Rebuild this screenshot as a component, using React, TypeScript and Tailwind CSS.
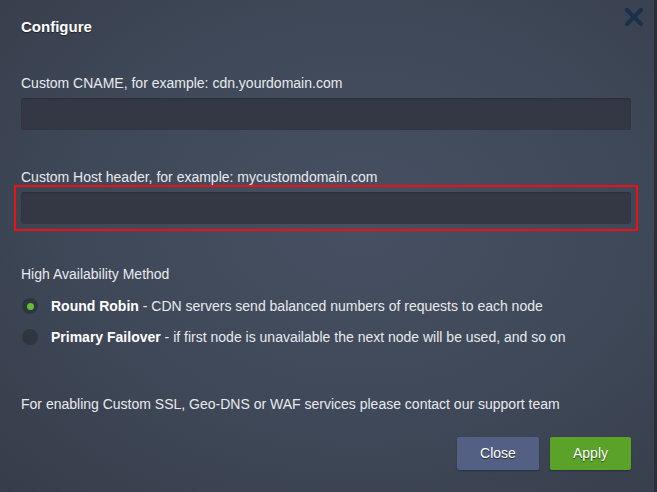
import { X } from "lucide-react"

function Field({ label, highlighted }: { label: string; highlighted?: boolean }) {
  return (
    <div className="flex flex-col">
      <label className="text-[14px] leading-[16px] text-[#e8eaee]">{label}</label>
      <div className={`-mx-[7px] -mb-[7px] p-[5px] border-2 ${highlighted ? "border-[#ee1111]" : "border-transparent"}`}>
        <div className="h-[32px] rounded-[3px] bg-[#333844] shadow-[inset_0_1px_2px_rgba(0,0,0,0.15)]" />
      </div>
    </div>
  )
}

function Radio({ checked, title, text }: { checked?: boolean; title: string; text: string }) {
  return (
    <div className="flex h-[16px] items-center gap-[13px] text-[14px] leading-[16px] text-[#e8eaee]">
      <span className="flex h-[16px] w-[16px] items-center justify-center rounded-full bg-[#30353f]">
        {checked && <span className="h-[7px] w-[7px] rounded-full bg-[#66bb3a]" />}
      </span>
      <span>
        <b className="font-bold text-white">{title}</b> - {text}
      </span>
    </div>
  )
}

export default function App() {
  return (
    <div className="flex h-[492px] w-[657px] bg-[#2a2f39] font-['Liberation_Sans',Arial,sans-serif]">
      <div className="relative flex w-[654px] flex-col bg-[radial-gradient(ellipse_at_55%_45%,#465062_0%,#3f4858_55%,#363d4a_100%)] pl-[21px] pr-[23px] pt-[18px]">
        <button className="absolute right-[6px] top-[3px] text-[#1a314d]">
          <X className="h-[28px] w-[28px]" strokeWidth={3.5} />
        </button>

        <h1 className="text-[15px] font-bold leading-[18px] text-white [text-shadow:0_1px_1px_rgba(0,0,0,0.5)]">
          Configure
        </h1>

        <div className="mt-[39px]">
          <Field label="Custom CNAME, for example: cdn.yourdomain.com" />
        </div>
        <div className="mt-[39px]">
          <Field label="Custom Host header, for example: mycustomdomain.com" highlighted />
        </div>

        <div className="mt-[42px] text-[14px] leading-[16px] text-[#e8eaee]">High Availability Method</div>
        <div className="mt-[16px] flex flex-col gap-[15px] pl-[1px]">
          <Radio checked title="Round Robin" text="CDN servers send balanced numbers of requests to each node" />
          <Radio title="Primary Failover" text="if first node is unavailable the next node will be used, and so on" />
        </div>

        <p className="mt-[51px] text-[14px] leading-[16px] text-[#e8eaee]">
          For enabling Custom SSL, Geo-DNS or WAF services please contact our support team
        </p>

        <div className="mt-[25px] flex justify-end gap-[11px]">
          <button className="h-[33px] w-[82px] rounded-[2px] bg-[#536083] text-[14px] text-white shadow-[0_1px_2px_rgba(0,0,0,0.3)] [text-shadow:0_1px_1px_rgba(0,0,0,0.6)]">
            Close
          </button>
          <button className="h-[33px] w-[81px] rounded-[2px] bg-[#5aa228] text-[14px] text-white shadow-[0_1px_2px_rgba(0,0,0,0.3)] [text-shadow:0_1px_1px_rgba(0,0,0,0.6)]">
            Apply
          </button>
        </div>
      </div>
    </div>
  )
}
